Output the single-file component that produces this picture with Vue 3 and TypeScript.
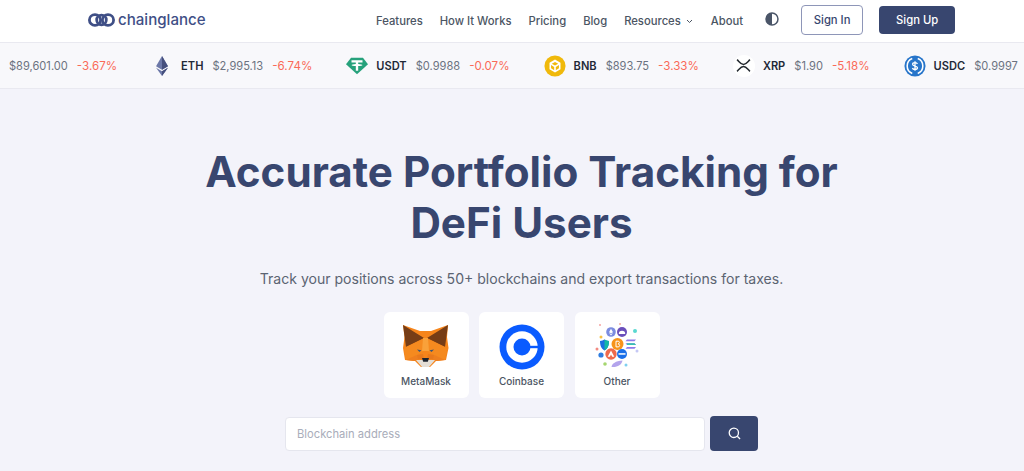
<script setup lang="ts">
interface Coin { sym: string; price: string; pct: string }
const coins: Coin[] = [
  { sym: 'ETH', price: '$2,995.13', pct: '-6.74%' },
  { sym: 'USDT', price: '$0.9988', pct: '-0.07%' },
  { sym: 'BNB', price: '$893.75', pct: '-3.33%' },
  { sym: 'XRP', price: '$1.90', pct: '-5.18%' },
  { sym: 'USDC', price: '$0.9997', pct: '' },
]
const nav = ['Features', 'How It Works', 'Pricing', 'Blog']
const dots = [
  { x: 11, y: 3, r: 1, c: '#f4a3a0' }, { x: 31, y: 2, r: 1, c: '#f6b0a0' },
  { x: 46, y: 9, r: 2, c: '#59d8d0' }, { x: 12, y: 15, r: 1.500, c: '#f6c344' },
  { x: 8, y: 27, r: 1.500, c: '#f28b82' }, { x: 48, y: 29, r: 1.500, c: '#c5c8f5' },
  { x: 16, y: 42, r: 1.800, c: '#a5d66f' }, { x: 37, y: 43, r: 1.500, c: '#7fd0f0' },
  { x: 12, y: 33, r: 2.600, c: '#2f7de0' },
]
</script>

<template>
  <div class="page">
    <header class="topbar">
      <a class="logo">
        <svg width="27" height="14" viewBox="0 0 27 14" fill="none" stroke="#3f4f86" stroke-width="2.800">
          <ellipse cx="7" cy="7" rx="5.600" ry="5.400" />
          <ellipse cx="20" cy="7" rx="5.600" ry="5.400" />
          <ellipse cx="13.500" cy="7" rx="4.800" ry="4.800" />
        </svg>
        <span class="logo-text">chainglance</span>
      </a>
      <nav class="nav">
        <a v-for="n in nav" :key="n" class="nav-link">{{ n }}</a>
        <a class="nav-link res">Resources
          <svg width="7" height="5" viewBox="0 0 7 5" fill="none" stroke="#4b5563" stroke-width="1"><path d="M1 1l2.500 2.500L6 1" /></svg>
        </a>
        <a class="nav-link about">About</a>
      </nav>
      <svg class="theme" width="14" height="14" viewBox="0 0 15 15">
        <circle cx="7.500" cy="7.500" r="6.400" fill="none" stroke="#4a5568" stroke-width="1.600" />
        <path d="M7.500 1a6.500 6.500 0 0 0 0 13z" fill="#4a5568" />
      </svg>
      <button class="btn outline">Sign In</button>
      <button class="btn solid">Sign Up</button>
    </header>

    <div class="ticker">
      <div class="tick">
        <span class="price">$89,601.00</span><span class="pct">-3.67%</span>
      </div>
      <div v-for="c in coins" :key="c.sym" class="tick">
        <svg v-if="c.sym === 'ETH'" class="ic" viewBox="0 0 24 24">
          <path d="M12 1 5.500 12.200l6.500 3.800 6.500-3.800z" fill="#6c78a8" />
          <path d="M12 1v15l6.500-3.800z" fill="#454f7d" />
          <path d="M5.500 13.800 12 23l6.500-9.200-6.500 3.800z" fill="#6c78a8" />
          <path d="M12 17.600V23l6.500-9.200z" fill="#454f7d" />
        </svg>
        <svg v-else-if="c.sym === 'USDT'" class="ic" viewBox="0 0 24 24">
          <path d="M5.500 3h13L24 10 12 21 0 10z" fill="#26a17b" />
          <path d="M6 5.800h12v2.400h-4.700v1.500c2.600.1 4.600.6 4.600 1.200s-2 1.100-4.600 1.200v5.100h-2.600v-5.100C8.100 12 6.100 11.500 6.100 10.900s2-1.100 4.600-1.200V8.200H6z" fill="#fff" />
        </svg>
        <svg v-else-if="c.sym === 'BNB'" class="ic" viewBox="0 0 24 24">
          <circle cx="12" cy="12" r="11.500" fill="#f0b90b" />
          <path d="M12 5l6 3.500v7L12 19l-6-3.500v-7zM12 7.500 8.500 9.500 12 11.500l3.500-2zM7.700 11v3.500l3.400 2v-3.500zM16.300 11l-3.400 2v3.500l3.400-2z" fill="#fff" fill-rule="evenodd" />
        </svg>
        <span v-else-if="c.sym === 'XRP'" class="ic disc">
          <svg width="15" height="13" viewBox="0 0 14 12" fill="none" stroke="#23292f" stroke-width="1.400">
            <path d="M1 .5c2.500 2.500 3.500 4.500 6 4.500s3.500-2 6-4.500M1 11.500C3.500 9 4.500 7 7 7s3.500 2 6 4.500" />
          </svg>
        </span>
        <svg v-else class="ic" viewBox="0 0 24 24">
          <circle cx="12" cy="12" r="11.500" fill="#2775ca" />
          <path d="M9 3.900a8.700 8.700 0 0 0 0 16.200M15 3.900a8.700 8.700 0 0 1 0 16.200" fill="none" stroke="#fff" stroke-width="1.700" />
          <path d="M14.600 9.800c-.3-1-1.200-1.500-2.600-1.500s-2.600.7-2.600 1.900c0 2.700 5.300 1.100 5.300 3.800 0 1.200-1.200 1.900-2.700 1.900s-2.500-.6-2.800-1.700M12 6.800v10.400" fill="none" stroke="#fff" stroke-width="1.400" />
        </svg>
        <span class="sym">{{ c.sym }}</span>
        <span class="price">{{ c.price }}</span>
        <span v-if="c.pct" class="pct">{{ c.pct }}</span>
      </div>
    </div>

    <main class="hero">
      <h1>Accurate Portfolio Tracking for<br />DeFi Users</h1>
      <p class="lead">Track your positions across 50+ blockchains and export transactions for taxes.</p>

      <div class="wallets">
        <div class="wallet">
          <svg class="wicon" viewBox="0 0 56 50">
            <g transform="translate(5 2)">
              <path d="M0 1 17 7h11L45 1l-1 12 1.500 11-2.500 12-10 1-6 6h-9l-6-6-10-1L0 24l1.500-11z" fill="#f6851b" />
              <path d="M0 1 21 14 3 23zM45 1 24 14l18 9z" fill="#763d16" />
              <path d="M3 23l17-8 1 12-7 4-11 5-2-11zM42 23l-17-8-1 12 7 4 11 5 2-11z" fill="#f58a1f" />
              <path d="M20 14h5l1 13h-7z" fill="#f9a13a" />
              <path d="M3 36l11-5 2 5-5 1zM42 36l-11-5-2 5 5 1z" fill="#ee7f1f" />
              <path d="M14 31l6-1 1 5h-6zM31 31l-6-1-1 5h6z" fill="#e8791c" />
              <path d="M13 36h19l-6 7h-7z" fill="#e4ded6" />
              <path d="M19 34h7l-1.200 3.800h-4.600z" fill="#1d2430" />
              <path d="M14 25.500l4.500.8-2 1.700zM31 25.500l-4.500.8 2 1.700z" fill="#3f5673" />
            </g>
          </svg>
          <span>MetaMask</span>
        </div>
        <div class="wallet">
          <svg class="wicon" viewBox="0 0 56 50">
            <circle cx="28" cy="25" r="22.500" fill="#0a5bff" />
            <circle cx="28" cy="25" r="15.700" fill="#fff" />
            <circle cx="28" cy="25" r="8.500" fill="#0a5bff" />
            <rect x="35" y="23.800" width="10" height="2.400" fill="#0a5bff" />
          </svg>
          <span>Coinbase</span>
        </div>
        <div class="wallet">
          <svg class="wicon" viewBox="0 0 56 50">
            <circle v-for="(d, i) in dots" :key="i" :cx="d.x" :cy="d.y" :r="d.r" :fill="d.c" />
            <circle cx="22" cy="10" r="4.800" fill="#7b8ce0" />
            <path d="M22 6.800l-2 3.400 2 1.100 2-1.100zM20 11l2 2.400 2-2.400-2 1.100z" fill="#fff" />
            <circle cx="33" cy="10" r="5" fill="#6b4fbb" />
            <path d="M29.800 12a3.200 3.200 0 0 1 6.400 0z" fill="#fff" />
            <path d="M11 19c2 0 3-.8 4.500-1.500C17 18.200 18 19 20 19c0 5-1.500 7.500-4.500 9.500C12.500 26.500 11 24 11 19z" fill="#1d6fe0" />
            <path d="M15.500 17.500C17 18.200 18 19 20 19c0 5-1.500 7.500-4.500 9.500z" fill="#14b8a6" />
            <circle cx="28.500" cy="22" r="6" fill="#f7931a" />
            <path d="M27 19.200h2.200c1.600 0 1.600 2.500 0 2.700 1.900.2 1.900 3 0 3H27z" fill="none" stroke="#fff" stroke-width="1" />
            <path d="M38 17.500h9l-1.500 1.700h-9zM36.500 21.200h9l1.500 1.700h-9zM38 25h9l-1.500 1.700h-9z" fill="#8f7bea" />
            <path d="M38 21.200h7.500l1.500 1.700h-9z" fill="#37c2b2" />
            <circle cx="22" cy="32" r="5.700" fill="#ef6a4c" />
            <path d="M22 28.500l3.300 6.200h-2.100L22 32.500l-1.200 2.200h-2.100z" fill="#fff" />
            <circle cx="33" cy="32" r="5" fill="#1a6fe8" />
            <rect x="29.500" y="31.200" width="7" height="1.500" fill="#fff" />
            <path d="M22.500 45c.5-3.500 4-6 11-6.500-1 4.500-5 7-11 6.500z" fill="#b3a4ec" />
          </svg>
          <span>Other</span>
        </div>
      </div>

      <form class="search" @submit.prevent>
        <input class="addr" type="text" placeholder="Blockchain address" />
        <button class="go" type="button" aria-label="Search">
          <svg width="13" height="13" viewBox="0 0 14 14" fill="none" stroke="#fff" stroke-width="1.400">
            <circle cx="6.300" cy="6.300" r="5" /><path d="M10 10l3 3" />
          </svg>
        </button>
      </form>
    </main>
  </div>
</template>

<style>
html, body { margin: 0; overflow: hidden; background: #f3f3fa; }
</style>

<style scoped>
.page {
  width: 1024px;
  height: 471px;
  overflow: hidden;
  background: #f3f3fa;
  font-family: Inter, "Liberation Sans", sans-serif;
  color: #4b5563;
}
.topbar {
  height: 42px;
  background: #fff;
  border-bottom: 1px solid #e9e9f0;
  display: flex;
  align-items: center;
  padding-left: 88px;
}
.logo { display: flex; align-items: center; gap: 3px; width: 288px; margin-top: -3px; }
.logo-text { font-size: 15.100px; font-weight: 500; color: #3f4f86; }
.nav { display: flex; gap: 17px; font-size: 11.250px; font-weight: 500; color: #4b5563; }
.res { display: flex; align-items: center; gap: 5px; }
.about { margin-left: 1px; }
.theme { margin-left: 22px; margin-top: -4px; }
.btn {
  font: 500 11.250px Inter, "Liberation Sans", sans-serif;
  border-radius: 4px;
  box-sizing: border-box;
}
.outline { width: 62px; height: 30px; margin-left: 22px; margin-top: -2px; background: #fff; border: 1px solid #8e96b8; color: #38466f; }
.solid { width: 76px; height: 28px; margin-left: 16px; margin-top: -2px; background: #38466f; border: 0; color: #fff; }
.ticker {
  height: 45px;
  background: #f8f8fb;
  border-bottom: 1px solid #e9e9f0;
  display: flex;
  align-items: center;
  gap: 34px;
  padding-left: 9px;
  white-space: nowrap;
  font-size: 11.100px;
}
.tick { display: flex; align-items: center; flex: none; }
.ic { width: 22px; height: 22px; margin-right: 8px; flex: none; }
.disc { display: flex; align-items: center; justify-content: center; background: #fff; border-radius: 50%; }
.sym { font-weight: 600; color: #1f2937; margin-right: 9px; }
.price { color: #6b7280; margin-right: 9px; }
.pct { color: #fa6a58; font-size: 11.600px; }
.hero { display: flex; flex-direction: column; align-items: center; padding-left: 19px; }
h1 {
  margin: 57px 0 0;
  font-size: 42.200px;
  line-height: 51px;
  font-weight: 700;
  color: #38466f;
  text-align: center;
}
.lead { margin: 20px 0 0; font-size: 14.050px; line-height: 22px; color: #5b6472; }
.wallets { display: flex; gap: 10.500px; margin-top: 22px; }
.wallet {
  width: 85px;
  height: 86px;
  background: #fff;
  border-radius: 6px;
  display: flex;
  flex-direction: column;
  align-items: center;
  font-size: 10px;
  line-height: 12px;
  font-weight: 500;
  color: #4b5563;
  box-sizing: border-box;
  padding-top: 10px;
}
.wicon { width: 56px; height: 50px; flex: none; }
.wallet span { margin-top: 3px; }
.search { display: flex; align-items: center; gap: 5px; margin-top: 18px; }
.addr {
  width: 420px;
  height: 34px;
  box-sizing: border-box;
  border: 1px solid #e5e6ee;
  border-radius: 4px;
  padding: 0 11px;
  background: #fff;
  font: 11.200px Inter, "Liberation Sans", sans-serif;
  outline: none;
}
.addr::placeholder { color: #a9adba; }
.go {
  width: 48px;
  height: 35px;
  background: #38466f;
  border: 0;
  border-radius: 4px;
  display: flex;
  align-items: center;
  justify-content: center;
}
</style>
